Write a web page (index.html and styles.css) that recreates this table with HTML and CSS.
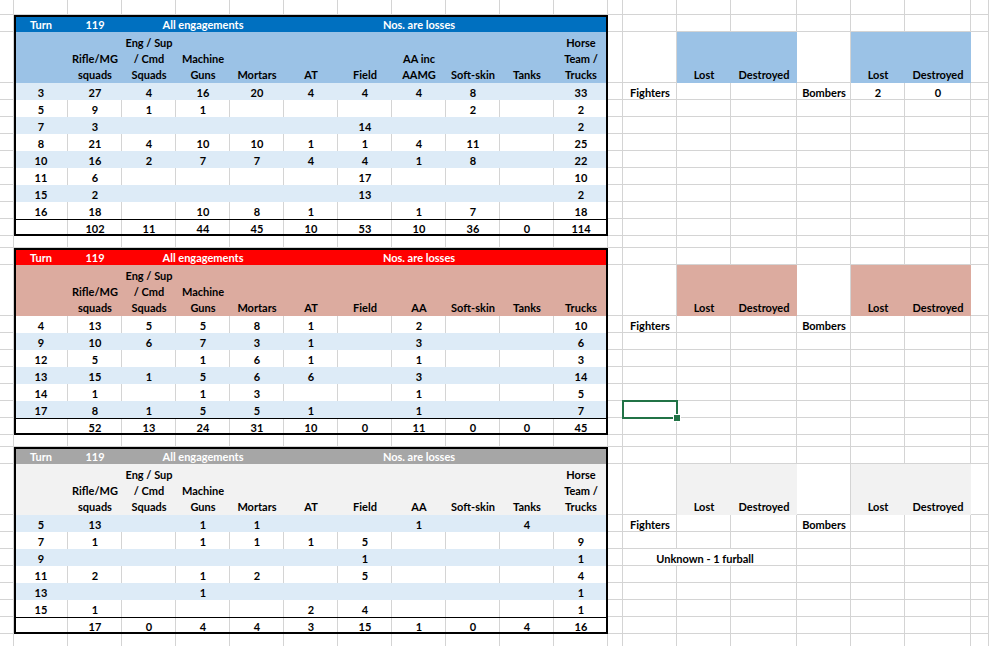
FILE: index.html
```
<!DOCTYPE html>
<html lang="en">
<head>
<meta charset="utf-8">
<title>Losses</title>
<link rel="stylesheet" href="styles.css">
</head>
<body>
<div class="sheet">
<!-- row 1 -->
<div></div><div></div><div></div><div></div><div></div><div></div><div></div><div></div><div></div><div></div><div></div><div></div><div></div><div></div><div></div><div></div><div></div><div></div><div></div><div></div>
<!-- blue section -->
<div></div><div class="xb L T">Turn</div><div class="xb T">119</div><div class="xb T s3">All engagements</div><div class="xb T"></div><div class="xb T s3">Nos. are losses</div><div class="xb T"></div><div class="xb T R"></div>
<div></div><div></div><div></div><div></div><div></div><div></div><div></div><div></div>

<div></div><div class="hb L"></div><div class="hb">Rifle/MG<br>squads</div><div class="hb">Eng / Sup<br>/ Cmd<br>Squads</div><div class="hb">Machine<br>Guns</div><div class="hb">Mortars</div><div class="hb">AT</div><div class="hb">Field</div><div class="hb">AA inc<br>AAMG</div><div class="hb">Soft-skin</div><div class="hb">Tanks</div><div class="hb R">Horse<br>Team /<br>Trucks</div>
<div></div><div></div><div class="hb">Lost</div><div class="hb">Destroyed</div><div></div><div class="hb">Lost</div><div class="hb">Destroyed</div><div></div>

<div></div><div class="b L">3</div><div class="b">27</div><div class="b">4</div><div class="b">16</div><div class="b">20</div><div class="b">4</div><div class="b">4</div><div class="b">4</div><div class="b">8</div><div class="b"></div><div class="b R">33</div>
<div></div><div>Fighters</div><div></div><div></div><div>Bombers</div><div>2</div><div>0</div><div></div>

<div></div><div class="w L">5</div><div class="w">9</div><div class="w">1</div><div class="w">1</div><div class="w"></div><div class="w"></div><div class="w"></div><div class="w"></div><div class="w">2</div><div class="w"></div><div class="w R">2</div>
<div></div><div></div><div></div><div></div><div></div><div></div><div></div><div></div>

<div></div><div class="b L">7</div><div class="b">3</div><div class="b"></div><div class="b"></div><div class="b"></div><div class="b"></div><div class="b">14</div><div class="b"></div><div class="b"></div><div class="b"></div><div class="b R">2</div>
<div></div><div></div><div></div><div></div><div></div><div></div><div></div><div></div>

<div></div><div class="w L">8</div><div class="w">21</div><div class="w">4</div><div class="w">10</div><div class="w">10</div><div class="w">1</div><div class="w">1</div><div class="w">4</div><div class="w">11</div><div class="w"></div><div class="w R">25</div>
<div></div><div></div><div></div><div></div><div></div><div></div><div></div><div></div>

<div></div><div class="b L">10</div><div class="b">16</div><div class="b">2</div><div class="b">7</div><div class="b">7</div><div class="b">4</div><div class="b">4</div><div class="b">1</div><div class="b">8</div><div class="b"></div><div class="b R">22</div>
<div></div><div></div><div></div><div></div><div></div><div></div><div></div><div></div>

<div></div><div class="w L">11</div><div class="w">6</div><div class="w"></div><div class="w"></div><div class="w"></div><div class="w"></div><div class="w">17</div><div class="w"></div><div class="w"></div><div class="w"></div><div class="w R">10</div>
<div></div><div></div><div></div><div></div><div></div><div></div><div></div><div></div>

<div></div><div class="b L">15</div><div class="b">2</div><div class="b"></div><div class="b"></div><div class="b"></div><div class="b"></div><div class="b">13</div><div class="b"></div><div class="b"></div><div class="b"></div><div class="b R">2</div>
<div></div><div></div><div></div><div></div><div></div><div></div><div></div><div></div>

<div></div><div class="w L">16</div><div class="w">18</div><div class="w"></div><div class="w">10</div><div class="w">8</div><div class="w">1</div><div class="w"></div><div class="w">1</div><div class="w">7</div><div class="w"></div><div class="w R">18</div>
<div></div><div></div><div></div><div></div><div></div><div></div><div></div><div></div>

<div></div><div class="k B L"></div><div class="k B">102</div><div class="k B">11</div><div class="k B">44</div><div class="k B">45</div><div class="k B">10</div><div class="k B">53</div><div class="k B">10</div><div class="k B">36</div><div class="k B">0</div><div class="k B R">114</div>
<div></div><div></div><div></div><div></div><div></div><div></div><div></div><div></div>

<div></div><div></div><div></div><div></div><div></div><div></div><div></div><div></div><div></div><div></div><div></div><div></div><div></div><div></div><div></div><div></div><div></div><div></div><div></div><div></div>

<!-- red section -->
<div></div><div class="xr L T">Turn</div><div class="xr T">119</div><div class="xr T s3">All engagements</div><div class="xr T"></div><div class="xr T s3">Nos. are losses</div><div class="xr T"></div><div class="xr T R"></div>
<div></div><div></div><div></div><div></div><div></div><div></div><div></div><div></div>

<div></div><div class="hr L"></div><div class="hr">Rifle/MG<br>squads</div><div class="hr">Eng / Sup<br>/ Cmd<br>Squads</div><div class="hr">Machine<br>Guns</div><div class="hr">Mortars</div><div class="hr">AT</div><div class="hr">Field</div><div class="hr">AA</div><div class="hr">Soft-skin</div><div class="hr">Tanks</div><div class="hr R">Trucks</div>
<div></div><div></div><div class="hr">Lost</div><div class="hr">Destroyed</div><div></div><div class="hr">Lost</div><div class="hr">Destroyed</div><div></div>

<div></div><div class="w L">4</div><div class="w">13</div><div class="w">5</div><div class="w">5</div><div class="w">8</div><div class="w">1</div><div class="w"></div><div class="w">2</div><div class="w"></div><div class="w"></div><div class="w R">10</div>
<div></div><div>Fighters</div><div></div><div></div><div>Bombers</div><div></div><div></div><div></div>

<div></div><div class="b L">9</div><div class="b">10</div><div class="b">6</div><div class="b">7</div><div class="b">3</div><div class="b">1</div><div class="b"></div><div class="b">3</div><div class="b"></div><div class="b"></div><div class="b R">6</div>
<div></div><div></div><div></div><div></div><div></div><div></div><div></div><div></div>

<div></div><div class="w L">12</div><div class="w">5</div><div class="w"></div><div class="w">1</div><div class="w">6</div><div class="w">1</div><div class="w"></div><div class="w">1</div><div class="w"></div><div class="w"></div><div class="w R">3</div>
<div></div><div></div><div></div><div></div><div></div><div></div><div></div><div></div>

<div></div><div class="b L">13</div><div class="b">15</div><div class="b">1</div><div class="b">5</div><div class="b">6</div><div class="b">6</div><div class="b"></div><div class="b">3</div><div class="b"></div><div class="b"></div><div class="b R">14</div>
<div></div><div></div><div></div><div></div><div></div><div></div><div></div><div></div>

<div></div><div class="w L">14</div><div class="w">1</div><div class="w"></div><div class="w">1</div><div class="w">3</div><div class="w"></div><div class="w"></div><div class="w">1</div><div class="w"></div><div class="w"></div><div class="w R">5</div>
<div></div><div></div><div></div><div></div><div></div><div></div><div></div><div></div>

<div></div><div class="b L">17</div><div class="b">8</div><div class="b">1</div><div class="b">5</div><div class="b">5</div><div class="b">1</div><div class="b"></div><div class="b">1</div><div class="b"></div><div class="b"></div><div class="b R">7</div>
<div></div><div class="sel"></div><div></div><div></div><div></div><div></div><div></div><div></div>

<div></div><div class="k B L"></div><div class="k B">52</div><div class="k B">13</div><div class="k B">24</div><div class="k B">31</div><div class="k B">10</div><div class="k B">0</div><div class="k B">11</div><div class="k B">0</div><div class="k B">0</div><div class="k B R">45</div>
<div></div><div></div><div></div><div></div><div></div><div></div><div></div><div></div>

<div></div><div></div><div></div><div></div><div></div><div></div><div></div><div></div><div></div><div></div><div></div><div></div><div></div><div></div><div></div><div></div><div></div><div></div><div></div><div></div>

<!-- grey section -->
<div></div><div class="xg L T">Turn</div><div class="xg T">119</div><div class="xg T s3">All engagements</div><div class="xg T"></div><div class="xg T s3">Nos. are losses</div><div class="xg T"></div><div class="xg T R"></div>
<div></div><div></div><div></div><div></div><div></div><div></div><div></div><div></div>

<div></div><div class="hg L"></div><div class="hg">Rifle/MG<br>squads</div><div class="hg">Eng / Sup<br>/ Cmd<br>Squads</div><div class="hg">Machine<br>Guns</div><div class="hg">Mortars</div><div class="hg">AT</div><div class="hg">Field</div><div class="hg">AA</div><div class="hg">Soft-skin</div><div class="hg">Tanks</div><div class="hg R">Horse<br>Team /<br>Trucks</div>
<div></div><div></div><div class="hg">Lost</div><div class="hg">Destroyed</div><div></div><div class="hg">Lost</div><div class="hg">Destroyed</div><div></div>

<div></div><div class="b L">5</div><div class="b">13</div><div class="b"></div><div class="b">1</div><div class="b">1</div><div class="b"></div><div class="b"></div><div class="b">1</div><div class="b"></div><div class="b">4</div><div class="b R"></div>
<div></div><div>Fighters</div><div></div><div></div><div>Bombers</div><div></div><div></div><div></div>

<div></div><div class="w L">7</div><div class="w">1</div><div class="w"></div><div class="w">1</div><div class="w">1</div><div class="w">1</div><div class="w">5</div><div class="w"></div><div class="w"></div><div class="w"></div><div class="w R">9</div>
<div></div><div></div><div></div><div></div><div></div><div></div><div></div><div></div>

<div></div><div class="b L">9</div><div class="b"></div><div class="b"></div><div class="b"></div><div class="b"></div><div class="b"></div><div class="b">1</div><div class="b"></div><div class="b"></div><div class="b"></div><div class="b R">1</div>
<div></div><div class="s3 note">Unknown - 1 furball</div><div></div><div></div><div></div><div></div>

<div></div><div class="w L">11</div><div class="w">2</div><div class="w"></div><div class="w">1</div><div class="w">2</div><div class="w"></div><div class="w">5</div><div class="w"></div><div class="w"></div><div class="w"></div><div class="w R">4</div>
<div></div><div></div><div></div><div></div><div></div><div></div><div></div><div></div>

<div></div><div class="b L">13</div><div class="b"></div><div class="b"></div><div class="b">1</div><div class="b"></div><div class="b"></div><div class="b"></div><div class="b"></div><div class="b"></div><div class="b"></div><div class="b R">1</div>
<div></div><div></div><div></div><div></div><div></div><div></div><div></div><div></div>

<div></div><div class="w L">15</div><div class="w">1</div><div class="w"></div><div class="w"></div><div class="w"></div><div class="w">2</div><div class="w">4</div><div class="w"></div><div class="w"></div><div class="w"></div><div class="w R">1</div>
<div></div><div></div><div></div><div></div><div></div><div></div><div></div><div></div>

<div></div><div class="k B L"></div><div class="k B">17</div><div class="k B">0</div><div class="k B">4</div><div class="k B">4</div><div class="k B">3</div><div class="k B">15</div><div class="k B">1</div><div class="k B">0</div><div class="k B">4</div><div class="k B R">16</div>
<div></div><div></div><div></div><div></div><div></div><div></div><div></div><div></div>

<div></div><div></div><div></div><div></div><div></div><div></div><div></div><div></div><div></div><div></div><div></div><div></div><div></div><div></div><div></div><div></div><div></div><div></div><div></div><div></div>
</div>
</body>
</html>
```

FILE: styles.css
```
* { box-sizing: border-box; }

html, body {
  margin: 0;
  padding: 0;
  background: #ffffff;
  overflow: hidden;
}

.sheet {
  display: grid;
  grid-template-columns: 14px repeat(11, 54px) 15px 54px 54px 66px 54px 54px 66px 1fr;
  grid-template-rows:
    15px 17px 51px repeat(9, 17px)
    12px 17px 51px repeat(7, 17px)
    12px 17px 51px repeat(7, 17px)
    17px;
  width: 989px;
  height: 646px;
  overflow: hidden;
  font-family: Lato, "DejaVu Sans", sans-serif;
  font-weight: 700;
  font-size: 11px;
  line-height: 14px;
  color: #000000;
}

.sheet > div {
  display: flex;
  align-items: flex-end;
  justify-content: center;
  text-align: center;
  white-space: nowrap;
  min-width: 0;
  box-shadow:
    var(--l, 0 0 #0000),
    var(--t, 0 0 #0000),
    var(--r, 0 0 #0000),
    var(--b, 0 0 #0000),
    var(--g, inset -1px -1px 0 #d4d4d4);
}

.s3 { grid-column: span 3; }

/* table borders */
.L { --l: inset 2px 0 0 #000000; }
.R { --r: inset -2px 0 0 #000000; }
.T { --t: inset 0 2px 0 #000000; }
.B { --b: inset 0 -2px 0 #000000; }
.k { --t: inset 0 1px 0 #000000; }

/* title bars */
.xb, .xr, .xg {
  color: #ffffff;
  --g: 0 0 #0000;
}
.xb { background: #0070c0; }
.xr { background: #ff0000; }
.xg { background: #a6a6a6; }

/* column headers */
.hb, .hr, .hg {
  line-height: 16px;
  --g: 0 0 #0000;
}
.hb { background: #9bc2e6; }
.hr { background: #dcab9f; }
.hg { background: #f2f2f2; }

/* banded rows */
.b {
  background: #ddebf7;
  --g: 0 0 #0000;
}
.w { --g: inset -1px 0 0 #d4d4d4; }

.note { padding-right: 10px; }

/* active cell */
.sel {
  position: relative;
  outline: 2px solid #217346;
  outline-offset: -1px;
  z-index: 1;
}
.sel::after {
  content: "";
  position: absolute;
  right: -4px;
  bottom: -4px;
  width: 6px;
  height: 6px;
  background: #217346;
  border: 1px solid #ffffff;
}
```
